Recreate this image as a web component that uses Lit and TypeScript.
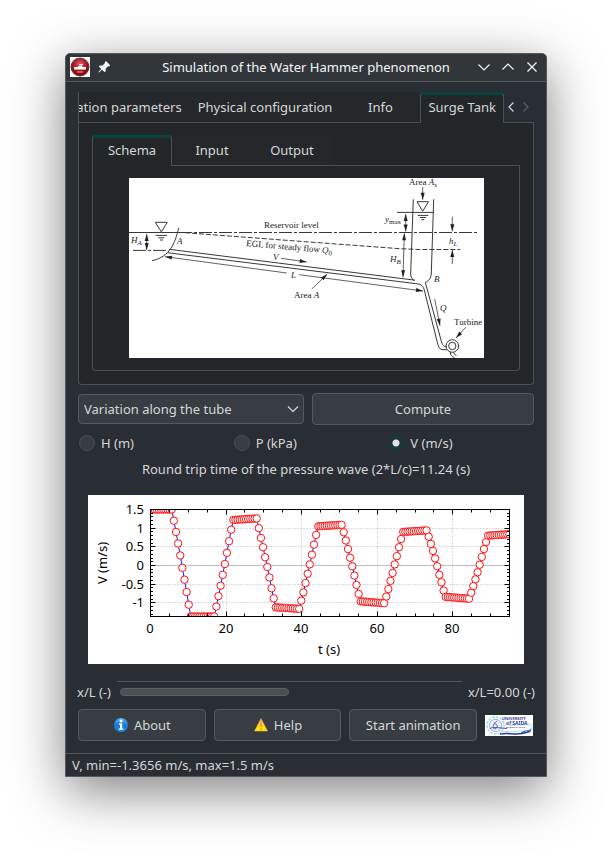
import { LitElement, html, svg, css } from "lit";
import { customElement, state } from "lit/decorators.js";

/* ---------- Velocity history at the valve ---------- */
const DT = 0.562;
const T_MAX = 95;
const V_MAX = 1.5;
const V_MIN = -1.3656;

// Each half period: plateau start/end values, then the 8 transition samples.
const halfPeriods: { from: number; to: number; count: number; ramp: number[] }[] = [
  { from: 1.5, to: 1.5, count: 11, ramp: [1.2, 0.9, 0.59, 0.27, -0.06, -0.38, -0.71, -1.05] },
  { from: -1.3656, to: -1.3656, count: 12, ramp: [-1.1, -0.82, -0.54, -0.25, 0.04, 0.34, 0.65, 0.96] },
  { from: 1.22, to: 1.26, count: 12, ramp: [1.0, 0.74, 0.49, 0.22, -0.04, -0.32, -0.61, -0.88] },
  { from: -1.12, to: -1.16, count: 12, ramp: [-0.94, -0.72, -0.47, -0.22, 0.03, 0.29, 0.56, 0.82] },
  { from: 1.05, to: 1.09, count: 12, ramp: [0.89, 0.67, 0.44, 0.21, -0.02, -0.27, -0.52, -0.76] },
  { from: -0.96, to: -1.01, count: 12, ramp: [-0.83, -0.63, -0.41, -0.2, 0.03, 0.25, 0.49, 0.71] },
  { from: 0.9, to: 0.94, count: 12, ramp: [0.77, 0.58, 0.39, 0.19, -0.02, -0.25, -0.45, -0.67] },
  { from: -0.84, to: -0.89, count: 12, ramp: [-0.73, -0.55, -0.37, -0.18, 0.02, 0.23, 0.44, 0.63] },
  { from: 0.8, to: 0.84, count: 11, ramp: [] },
];

const samples: number[] = halfPeriods.flatMap(({ from, to, count, ramp }) => [
  ...Array.from({ length: count }, (_, i) => from + ((to - from) * i) / (count - 1)),
  ...ramp,
]);

const FRAME = { x: 62.5, y: 14.5, w: 359, h: 107 };
const px = (t: number) => FRAME.x + (t / T_MAX) * FRAME.w;
const py = (v: number) => FRAME.y + ((V_MAX - v) / (V_MAX - V_MIN)) * FRAME.h;
const snap = (n: number) => Math.floor(n) + 0.5;

@customElement("velocity-plot")
export class VelocityPlot extends LitElement {
  static styles = css`
    :host { display: block; background: #fff; }
    svg { display: block; width: 100%; height: auto; }
    text { font: 13px "Noto Sans", sans-serif; fill: #000; }
    .end { text-anchor: end; }
    .mid { text-anchor: middle; }
    .frame { fill: none; stroke: #000; }
    .tick { stroke: #000; }
    .grid { stroke: #b8b8b8; stroke-dasharray: 1 2; }
    .zero { stroke: #c0c0c0; }
    .curve { fill: none; stroke: #1414ff; stroke-width: 1; }
    .dot { fill: #fff; stroke: #ff1010; stroke-width: 1; }
  `;

  render() {
    const right = FRAME.x + FRAME.w;
    const bottom = FRAME.y + FRAME.h;
    const xMajor = [20, 40, 60, 80];
    const yMajor = [1, 0.5, -0.5, -1];
    const xMinor = Array.from({ length: 18 }, (_, i) => (i + 1) * 5);
    const yMinor = Array.from({ length: 28 }, (_, i) => (14 - i) / 10);
    return html`<svg viewBox="0 0 436 169" role="img" aria-label="Velocity against time">
      <defs><clipPath id="area"><rect x="62" y="14" width="360" height="108" /></clipPath></defs>
      ${xMajor.map((t) => svg`<line class="grid" x1=${snap(px(t))} x2=${snap(px(t))} y1=${FRAME.y} y2=${bottom} />`)}
      ${yMajor.map((v) => svg`<line class="grid" x1=${FRAME.x} x2=${right} y1=${snap(py(v))} y2=${snap(py(v))} />`)}
      <line class="zero" x1=${FRAME.x} x2=${right} y1=${snap(py(0))} y2=${snap(py(0))} />
      <g clip-path="url(#area)">
        <polyline class="curve" points=${samples.map((v, i) => `${px(i * DT)},${py(v)}`).join(" ")} />
        ${samples.map((v, i) => svg`<circle class="dot" cx=${px(i * DT)} cy=${py(v)} r="3.7" />`)}
      </g>
      ${xMinor.map((t) => {
        const x = snap(px(t));
        const l = t % 20 === 0 ? 5 : 3;
        return svg`<path class="tick" d="M${x} ${FRAME.y}v${l}M${x} ${bottom}v${-l}" />`;
      })}
      ${yMinor.map((v) => {
        const y = snap(py(v));
        const l = Math.round(v * 10) % 5 === 0 ? 5 : 2.5;
        return svg`<path class="tick" d="M${FRAME.x} ${y}h${l}M${right} ${y}h${-l}" />`;
      })}
      <rect class="frame" x=${FRAME.x} y=${FRAME.y} width=${FRAME.w} height=${FRAME.h} />
      ${[1.5, 1, 0.5, 0, -0.5, -1].map((v) => svg`<text class="end" x="56" y=${Math.floor(py(v)) + 5}>${v}</text>`)}
      ${[0, 20, 40, 60, 80].map((t) => svg`<text class="mid" x=${Math.floor(px(t))} y="138">${t}</text>`)}
      <text class="mid" x="241" y="159">t (s)</text>
      <text class="mid" transform="translate(19 68) rotate(-90)">V (m/s)</text>
    </svg>`;
  }
}

@customElement("surge-tank-schema")
export class SurgeTankSchema extends LitElement {
  static styles = css`
    :host { display: block; width: 355px; max-width: 100%; background: #fff; }
    svg { display: block; width: 100%; height: auto; }
    .ink { fill: none; stroke: #383838; stroke-width: 1; }
    .thin { fill: none; stroke: #3a3a3a; stroke-width: 0.8; }
    .head { fill: #222; }
    .center { stroke-dasharray: 13 2 3 2; }
    .dash { stroke-dasharray: 5 2; }
    text { font: 9px "Liberation Serif", serif; fill: #222; }
    .i { font-style: italic; }
    .s { font-size: 7px; }
    .up { font-style: normal; }
  `;

  private arrow(x1: number, y1: number, x2: number, y2: number, both = false) {
    const a = Math.atan2(y2 - y1, x2 - x1);
    const head = (x: number, y: number, r: number) => {
      const bx = x - 7 * Math.cos(r);
      const by = y - 7 * Math.sin(r);
      const nx = 2 * Math.sin(r);
      const ny = -2 * Math.cos(r);
      return svg`<path class="head" d="M${x} ${y}L${bx + nx} ${by + ny}L${bx - nx} ${by - ny}Z" />`;
    };
    return svg`<path class="thin" d="M${x1} ${y1}L${x2} ${y2}" />${head(x2, y2, a)}${both ? head(x1, y1, a + Math.PI) : ""}`;
  }

  render() {
    return html`<svg viewBox="0 0 355 180" role="img" aria-label="Surge tank schema">
      <path class="ink" d="M0 54.5H50" />
      <path class="ink center" d="M50 54.5H348" />
      <path class="ink dash" d="M56 54.7L176 63.7L271 70.7L290 71.5H331" />
      <path class="ink" d="M26.3 44.3H38.3L32.3 53.9ZM26.7 57.4H38M29.3 59.8H35.3M31 62H34" />
      <path class="ink center" d="M4 72.4H37" />
      <path class="ink" d="M49.7 50C46 65 41 79 23 82.7" />
      <path class="ink" d="M40 71.3L286 102.2M38.3 74.7L284 105.3C292 106 293.5 107 295 111L308.3 164.3C309.5 169.5 311 171.7 314 171.7H318" />
      <path class="ink" d="M284.3 21.3L281.7 95C281.5 99 283 100.5 285 102.5" />
      <path class="ink" d="M304.7 21.3L302.3 95C302 101 300 102.5 296.3 104.3L312 162C313.5 167.5 314.5 168.7 318 168.7" />
      <path class="ink" d="M268 34.4H304.7M288 23.7H299.5L293.7 33.2ZM288.7 37.4H299.3M291 39.5H297M292.3 41.7H295.3" />
      <circle class="ink" cx="323.3" cy="168" r="6.3" />
      <circle class="ink" cx="323.3" cy="168" r="3.7" />
      <path class="ink" d="M321.5 174C321 177 323 179 325.5 179.5M325 174.5C324.5 176 326 177 327.5 177.5" />
      ${this.arrow(17.7, 56, 17.7, 72, true)}
      ${this.arrow(157.7, 95, 36, 78.7)}
      ${this.arrow(170.3, 96.7, 294, 113)}
      ${this.arrow(152, 80.3, 177.7, 84)}
      ${this.arrow(182.7, 111, 198.3, 96)}
      ${this.arrow(293.7, 9.3, 293.7, 21.7)}
      ${this.arrow(276.7, 36, 276.7, 53.5, true)}
      ${this.arrow(275.3, 55.3, 274, 99.3, true)}
      ${this.arrow(323.3, 38.7, 323.3, 53.3)}
      ${this.arrow(323.3, 86, 323.3, 72)}
      ${this.arrow(305.7, 121, 311, 147.7)}
      ${this.arrow(336.7, 149.3, 327, 160)}
      <text x="135" y="50">Reservoir level</text>
      <text transform="translate(117 68) rotate(5)">EGL for steady flow <tspan class="i">Q</tspan><tspan class="s" dy="2">0</tspan></text>
      <text class="i" x="2" y="65">H<tspan class="s" dy="2">A</tspan></text>
      <text class="i" x="48" y="66">A</text>
      <text class="i" x="144" y="82">V</text>
      <text class="i" x="162" y="100">L</text>
      <text x="165" y="120">Area <tspan class="i">A</tspan></text>
      <text x="280" y="7">Area <tspan class="i">A</tspan><tspan class="i s" dy="2">s</tspan></text>
      <text class="i" x="256" y="44">y<tspan class="s up" dy="2">max</tspan></text>
      <text class="i" x="261" y="84">H<tspan class="s" dy="2">B</tspan></text>
      <text class="i" x="320" y="66">h<tspan class="s" dy="2">L</tspan></text>
      <text class="i" x="305" y="104">B</text>
      <text class="i" x="311" y="133">Q</text>
      <text x="325" y="147">Turbine</text>
    </svg>`;
  }
}

@customElement("app-root")
export class AppRoot extends LitElement {
  static styles = css`
    * { box-sizing: border-box; }
    :host {
      display: block;
      min-height: 100vh;
      padding: 53px 65px 77px;
      background: #fff;
      overflow: hidden;
      font: 13px/18px "Noto Sans", sans-serif;
      color: #d6d7d7;
      box-sizing: border-box;
    }
    button, select, input { font: inherit; color: inherit; margin: 0; }
    button { padding: 0; border: 0; background: none; }
    svg { display: block; }
    .line { fill: none; stroke: currentColor; stroke-width: 1.2; }

    .window {
      border: 1px solid #55595c;
      border-radius: 5px 5px 0 0;
      background: #292d34;
      box-shadow: 0 14px 52px rgba(0, 0, 0, 0.5);
    }
    .titlebar {
      display: flex;
      align-items: center;
      height: 28px;
      padding: 0 2px 1px 4px;
      background: #31363b;
      border-bottom: 1px solid #54585b;
      border-radius: 4px 4px 0 0;
      color: #f4f5f5;
    }
    .pin { margin-left: 6px; }
    .title { flex: 1; margin: 0; text-align: center; font: inherit; padding-left: 28px; }
    .wm { display: flex; justify-content: center; width: 24px; }

    .main { padding: 10px 12px 12px; }
    .tabs { display: flex; height: 31px; }
    .scroller { display: flex; flex: 1; justify-content: flex-end; min-width: 0; border-left: 1px solid #4c5053; background: #23272b; overflow: hidden; }
    .tab {
      flex: none;
      min-width: 80px;
      padding: 0 8px 2px;
      background: #24282b;
      white-space: nowrap;
    }
    .tab.on {
      border: 1px solid #4c5053;
      border-width: 0 1px;
      border-radius: 4px 4px 0 0;
      background: #23272a;
      box-shadow: inset 0 3px #08443d;
      padding: 0 7px 2px;
    }
    /* Every tab but the chosen one stands on the pane's top edge. */
    .tab:not(.on), .arrows, .rest { border-bottom: 1px solid #4c5053; }
    .tab:not(.on) { padding-bottom: 1px; }
    .rest { flex: 1; border-right: 1px solid #4c5053; border-radius: 0 4px 0 0; height: 6px; align-self: flex-end; border-right: 0; border-radius: 0; }
    .arrows { display: flex; align-items: center; width: 30px; padding-right: 1px; }
    .arrows button { flex: 1; display: flex; justify-content: center; }
    .off { color: #5c6063; }
    .pane {
      border: 1px solid #4c5053;
      border-top: 0;
      background: #23272a;
    }
    .outer { border-radius: 0 0 4px 4px; padding: 12px 13px 13px; }
    .inner { border-radius: 0 0 4px 4px; padding: 12px 0; display: flex; justify-content: center; }

    .row { display: flex; align-items: center; gap: 8px; margin-top: 8px; }
    .btn {
      display: flex;
      flex: 1;
      align-items: center;
      justify-content: center;
      gap: 5px;
      height: 32px;
      border: 1px solid #555a5d;
      border-radius: 4px;
      background: #373d42;
    }
    .choice { display: grid; grid-template-columns: 226fr 222fr; }
    .combo { position: relative; }
    .combo select {
      display: block;
      width: 100%;
      height: 30px;
      padding: 0 24px 0 5px;
      border: 1px solid #55595c;
      border-radius: 4px;
      background: #373d42;
      appearance: none;
    }
    .combo svg { position: absolute; right: 5px; top: 11px; pointer-events: none; }
    .radios { display: grid; grid-template-columns: repeat(3, 1fr); gap: 8px; margin-top: 9px; }
    .radios label { display: flex; align-items: center; gap: 6px; padding-left: 1px; }
    .radios input {
      appearance: none;
      width: 16px;
      height: 16px;
      border: 1px solid #4b5054;
      border-radius: 50%;
      background: #373d42;
    }
    .radios input:checked {
      border-color: #0b4039;
      background: radial-gradient(circle, #e2e4e4 3px, #1b3436 4px);
    }
    .trip { margin: 8px 0 17px; text-align: center; }
    velocity-plot { margin: 0 10px; }
    .rule { margin: 17px 72px 0 39px; border: 0; border-top: 1px solid #54585b; }
    .position { display: flex; align-items: center; margin: 1px -1px 8px; height: 18px; }
    .position input {
      appearance: none;
      flex: 1;
      min-width: 0;
      height: 8px;
      margin: 0 6px 0 9px;
      background: transparent;
    }
    .position input::-webkit-slider-thumb {
      appearance: none;
      width: 169px;
      height: 8px;
      border: 1px solid #5c6163;
      border-radius: 4px;
      background: #4a4f52;
    }
    .actions { margin: 0; padding-right: 1px; }
    .status { height: 23px; padding: 2px 6px; border-top: 1px solid #54585b; }
    .logo text { font: bold 4px "Noto Sans", sans-serif; fill: #3b3c94; }
    .logo .big { font-size: 5px; }
    .logo .small { font-size: 2px; }
  `;

  @state() private tab = "Surge Tank";
  @state() private page = "Schema";
  @state() private quantity = "V (m/s)";

  private tabButton(name: string, current: string, pick: (n: string) => void) {
    const on = name === current;
    return html`<button role="tab" aria-selected=${on} class="tab ${on ? "on" : ""}" @click=${() => pick(name)}>${name}</button>`;
  }

  render() {
    return html`
      <div class="window">
        <header class="titlebar">
          <svg width="20" height="20" viewBox="0 0 20 20">
            <defs><radialGradient id="red" cy="0.35"><stop offset="0" stop-color="#d8646a" /><stop offset="0.7" stop-color="#b01820" /><stop offset="1" stop-color="#861016" /></radialGradient></defs>
            <rect width="20" height="20" fill="#fff" />
            <circle cx="10" cy="10" r="9" fill="url(#red)" stroke="#5c1a1c" stroke-width="0.8" />
            <path d="M4 10H8L8.500 9H12L12.500 10H16V12.500H4ZM9 7H13V8H11.500V9H10.500V8H9Z" fill="#fff" />
            <path d="M7 15H13" stroke="#e9a5a8" />
          </svg>
          <svg class="pin" width="16" height="16" viewBox="0 0 16 16">
            <path d="M10 2L14.200 6.200L13 7.400L12.200 7.200L9.700 9.600V12.300L8.700 13.200L6 10.700L3 13.600L2.400 13L5.300 10L2.800 7.500L3.700 6.500L6.500 6.400L9 4.100L8.800 3.200Z" fill="currentColor" />
          </svg>
          <h1 class="title">Simulation of the Water Hammer phenomenon</h1>
          <button class="wm" aria-label="Minimize"><svg width="12" height="12" viewBox="0 0 12 12"><path class="line" d="M0.500 3.500L6 9L11.500 3.500" /></svg></button>
          <button class="wm" aria-label="Maximize"><svg width="12" height="12" viewBox="0 0 12 12"><path class="line" d="M0.500 8.500L6 3L11.500 8.500" /></svg></button>
          <button class="wm" aria-label="Close"><svg width="12" height="12" viewBox="0 0 12 12"><path class="line" d="M1.500 1.500L10.500 10.500M10.500 1.500L1.500 10.500" /></svg></button>
        </header>

        <main class="main">
          <div class="tabs">
            <div class="scroller" role="tablist">
              ${["Simulation parameters", "Physical configuration", "Info", "Surge Tank"].map((n) =>
                this.tabButton(n, this.tab, (v) => (this.tab = v)))}
            </div>
            <div class="arrows">
              <button aria-label="Previous tabs"><svg width="8" height="12" viewBox="0 0 8 12"><path class="line" d="M6.500 1.500L2 6L6.500 10.500" /></svg></button>
              <button aria-label="Next tabs" class="off"><svg width="8" height="12" viewBox="0 0 8 12"><path class="line" d="M1.500 1.500L6 6L1.500 10.500" /></svg></button>
            </div>
          </div>
          <section class="pane outer">
            <div class="tabs" role="tablist">
              ${["Schema", "Input", "Output"].map((n) => this.tabButton(n, this.page, (v) => (this.page = v)))}
              <span class="rest" role="presentation"></span>
            </div>
            <div class="pane inner"><surge-tank-schema></surge-tank-schema></div>
          </section>

          <div class="row choice">
            <div class="combo">
              <select aria-label="Plot type"><option>Variation along the tube</option></select>
              <svg width="12" height="8" viewBox="0 0 12 8"><path class="line" d="M1 1.500L6 6.500L11 1.500" /></svg>
            </div>
            <button class="btn">Compute</button>
          </div>

          <div class="radios">
            ${["H (m)", "P (kPa)", "V (m/s)"].map((q) => html`<label>
              <input type="radio" name="quantity" .checked=${q === this.quantity} @change=${() => (this.quantity = q)} />${q}</label>`)}
          </div>
          <p class="trip">Round trip time of the pressure wave (2*L/c)=11.24 (s)</p>

          <velocity-plot></velocity-plot>

          <hr class="rule" />
          <div class="position">
            <label for="pos">x/L (-)</label>
            <input id="pos" type="range" min="0" max="100" value="0" />
            <output for="pos">x/L=0.00 (-)</output>
          </div>

          <div class="row actions">
            <button class="btn">
              <svg width="16" height="16" viewBox="0 0 16 16">
                <defs><linearGradient id="blue" x2="0" y2="1"><stop offset="0" stop-color="#5fb4f2" /><stop offset="0.5" stop-color="#1779d8" /><stop offset="1" stop-color="#1b8af0" /></linearGradient></defs>
                <circle cx="8" cy="8" r="7" fill="url(#blue)" />
                <circle cx="8" cy="4" r="1.500" fill="#fff" />
                <path d="M6 6.500H9.200V11.500H10.300V12.700H5.800V11.500H7V7.700H6Z" fill="#fff" />
              </svg>
              About
            </button>
            <button class="btn">
              <svg width="16" height="16" viewBox="0 0 16 16">
                <defs><linearGradient id="amber" x2="0" y2="1"><stop offset="0" stop-color="#f59a3a" /><stop offset="0.5" stop-color="#fbd08a" /><stop offset="0.55" stop-color="#ffd800" /><stop offset="1" stop-color="#ffe61a" /></linearGradient></defs>
                <path d="M8 1.500L14.500 14H1.500Z" fill="url(#amber)" stroke="#f3b01c" stroke-width="0.600" stroke-linejoin="round" />
                <path d="M8 6V10M8 11.200V12.700" stroke="#d9822a" stroke-width="1.200" />
              </svg>
              Help
            </button>
            <button class="btn">Start animation</button>
            <svg class="logo" width="48" height="21" viewBox="0 0 48 21" role="img" aria-label="University of Saida">
              <rect width="48" height="21" fill="#fff" />
              <circle cx="10.500" cy="10.500" r="8.500" fill="none" stroke="#9fdcf2" stroke-width="1.500" stroke-dasharray="3 1" />
              <circle cx="10.500" cy="10.500" r="6.200" fill="#eef3fb" stroke="#8e97cc" stroke-width="0.800" />
              <path d="M12 6C8 8 7 13 9.500 14C13 14 13 8 9.500 9M5 13.500C9 11.500 13 13 22 13.500" fill="none" stroke="#4659ae" />
              <path d="M15 19C24 17.500 29 20 37 18.500L45 16.500" fill="none" stroke="#2b3f9c" stroke-width="1.600" />
              <path d="M36 18L41 15.500L45 16L46 14" fill="none" stroke="#2b3f9c" stroke-width="1.200" />
              <path d="M17 17C28 15.500 36 17.500 46 14C47.500 12 47 10 45 9.500L24 10.500" fill="none" stroke="#8fd8f2" stroke-width="0.800" />
              <text x="17" y="5">UNIVERSITY</text>
              <text class="big" x="21" y="10">of SAIDA</text>
              <text class="small" x="21" y="13">DR MOULAY TAHAR</text>
            </svg>
          </div>
        </main>
        <footer class="status">V, min=-1.3656 m/s, max=1.5 m/s</footer>
      </div>
    `;
  }
}
